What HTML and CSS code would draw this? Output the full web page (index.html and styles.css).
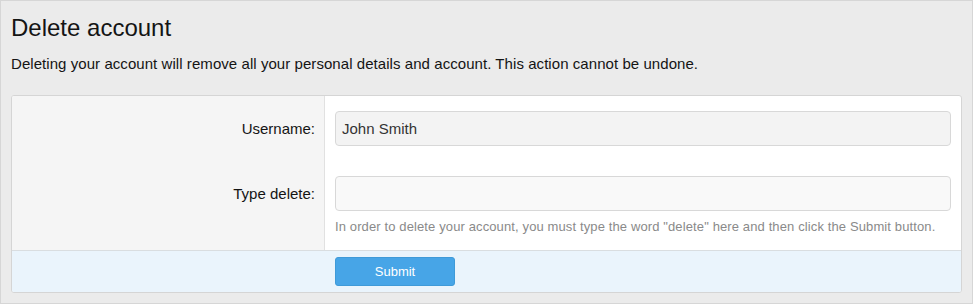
FILE: index.html
```html
<!DOCTYPE html>
<html>
<head>
<meta charset="utf-8">
<link rel="stylesheet" href="styles.css">
</head>
<body>
<div class="page">
  <h1 class="title">Delete account</h1>
  <p class="intro">Deleting your account will remove all your personal details and account. This action cannot be undone.</p>
  <form class="panel">
    <div class="rows">
      <div class="labels">
        <div class="label l1">Username:</div>
        <div class="label l2">Type delete:</div>
      </div>
      <div class="fields">
        <div class="input readonly">John Smith</div>
        <div class="input empty"></div>
        <div class="help">In order to delete your account, you must type the word "delete" here and then click the Submit button.</div>
      </div>
    </div>
    <div class="footer">
      <div class="footer-spacer"></div>
      <div class="footer-main"><button type="button" class="btn">Submit</button></div>
    </div>
  </form>
</div>
</body>
</html>
```
FILE: styles.css
```css
html, body { margin: 0; padding: 0; background: #fff; }
body { font-family: "Liberation Sans", Arial, sans-serif; color: #141414; }
.page {
  box-sizing: border-box;
  width: 973px;
  height: 304px;
  background: #ebebeb;
  border: 1px solid #d6d6d6;
  padding: 0 10px 0 10px;
}
.title {
  margin: 13px 0 0 0;
  font-size: 24px;
  font-weight: normal;
  line-height: 28px;
  color: #141414;
}
.intro {
  margin: 12px 0 0 0;
  font-size: 15px;
  line-height: 20px;
  letter-spacing: 0.06px;
}
.panel {
  margin-top: 21px;
  border: 1px solid #d5d5d5;
  border-radius: 3px;
  background: #fff;
  overflow: hidden;
}
.rows { display: flex; }
.labels {
  width: 313px;
  flex: none;
  background: #f5f5f5;
  border-right: 1px solid #e1e1e1;
  box-sizing: border-box;
  padding-right: 9px;
}
.label {
  text-align: right;
  font-size: 15px;
  line-height: 20px;
  color: #141414;
}
.l1 { margin-top: 23px; }
.l2 { margin-top: 45px; }
.fields {
  flex: 1;
  padding: 15px 10px 15px 10px;
}
.input {
  box-sizing: border-box;
  height: 35px;
  border: 1px solid #d8d8d8;
  border-radius: 4px;
  padding: 0 6px;
  font-size: 15px;
  line-height: 33px;
  color: #333;
}
.readonly { background: #f3f3f3; }
.empty { background: #f9f9f9; margin-top: 30px; }
.help {
  margin-top: 7px;
  font-size: 13px;
  line-height: 17px;
  letter-spacing: 0.12px;
  color: #8a8a8a;
}
.footer {
  display: flex;
  background: #eaf4fc;
  border-top: 1px solid #d9dde0;
  height: 42px;
  box-sizing: border-box;
}
.footer-spacer { width: 313px; flex: none; }
.footer-main { padding: 6px 10px; }
.btn {
  width: 120px;
  height: 29px;
  background: #47a5e7;
  border: 1px solid #3f9ad8;
  border-radius: 3px;
  color: #fff;
  font-family: "Liberation Sans", Arial, sans-serif;
  font-size: 13px;
  padding: 0;
}
```
